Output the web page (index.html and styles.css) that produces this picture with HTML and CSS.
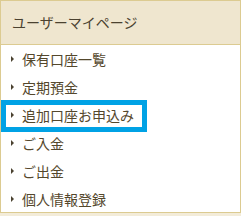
FILE: index.html
```html
<!DOCTYPE html>
<html lang="ja">
<head>
    <meta charset="UTF-8">
    <meta name="viewport" content="width=device-width, initial-scale=1.0">
    <title>ユーザーマイページ</title>
    <link rel="stylesheet" href="styles.css">
</head>
<body>
    <div class="mypage">
        <div class="mypage-title">ユーザーマイページ</div>
        <ul class="mypage-menu">
            <li><a href="#">保有口座一覧</a></li>
            <li><a href="#">定期預金</a></li>
            <li class="current"><a href="#">追加口座お申込み</a></li>
            <li><a href="#">ご入金</a></li>
            <li><a href="#">ご出金</a></li>
            <li><a href="#">個人情報登録</a></li>
        </ul>
    </div>
</body>
</html>
```

FILE: styles.css
```css
body {
    margin: 0;
    padding: 0;
    background-color: #f3ecd9;
    font-family: "Noto Sans CJK JP", "Noto Sans", sans-serif;
}
.mypage {
    width: 239px;
    height: 211px;
    border: 1px solid #dccb91;
    background: #fff;
}
.mypage-title {
    height: 43px;
    line-height: 43px;
    padding-left: 11px;
    background: #efe6cf;
    border-bottom: 1px solid #dccb91;
    color: #4b4230;
    font-size: 14px;
}
.mypage-menu {
    list-style: none;
    margin: 0;
    padding: 0;
}
.mypage-menu li {
    position: relative;
    height: 28px;
    line-height: 26px;
    padding-left: 21px;
}
.mypage-menu li::before {
    content: "";
    position: absolute;
    left: 10px;
    top: 11px;
    border-left: 3px solid #4b4230;
    border-top: 3px solid transparent;
    border-bottom: 3px solid transparent;
}
.mypage-menu a {
    color: #54472c;
    font-size: 14px;
    text-decoration: none;
}
.mypage-menu li.current::after {
    content: "";
    position: absolute;
    left: 0;
    top: -1px;
    width: 136px;
    height: 22px;
    border: 5px solid #00a2e5;
}
```
